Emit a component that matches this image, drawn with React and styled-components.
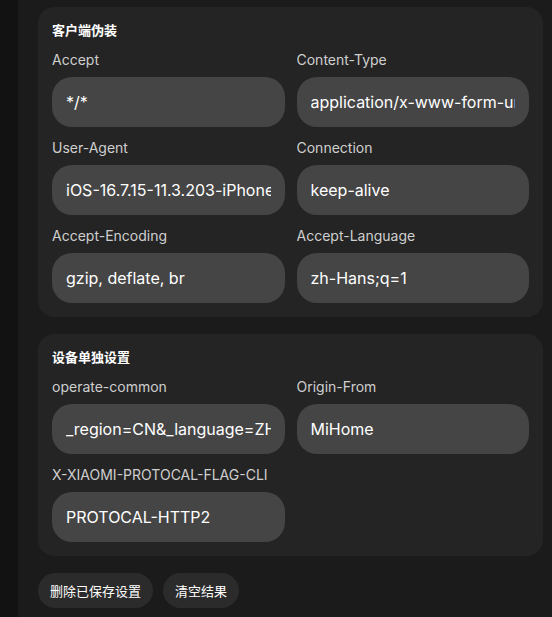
import styled, { createGlobalStyle } from "styled-components";

const GlobalStyle = createGlobalStyle`
  html, body, #root {
    height: 100%;
  }
  body {
    margin: 0;
    background: #1b1b1b;
    font-family: Inter, "Noto Sans CJK SC", sans-serif;
    color: #fff;
    overflow: hidden;
  }
  * {
    box-sizing: border-box;
  }
`;

const Layout = styled.div`
  display: flex;
  height: 100%;
`;

const SideStrip = styled.div`
  width: 18px;
  flex-shrink: 0;
  background: #121212;
`;

const Main = styled.div`
  flex: 1;
  padding: 7px 9px 0 20px;
  display: flex;
  flex-direction: column;
  gap: 17px;
`;

const Card = styled.section`
  background: #242424;
  border-radius: 16px;
  padding: 14px;
`;

const CardTitle = styled.h3`
  margin: 0 0 11px;
  font-family: "Noto Sans CJK SC", sans-serif;
  font-size: 13px;
  line-height: 18px;
  font-weight: 700;
  color: #fff;
`;

const FieldGrid = styled.div`
  display: grid;
  grid-template-columns: 1fr 1fr;
  column-gap: 12px;
  row-gap: 11px;
`;

const Field = styled.label`
  display: flex;
  flex-direction: column;
  gap: 7px;
  min-width: 0;
`;

const FieldName = styled.span`
  font-size: 14px;
  line-height: 20px;
  color: #cfcfcf;
  white-space: nowrap;
  overflow: hidden;
`;

const Input = styled.input`
  width: 100%;
  height: 50px;
  border: none;
  outline: none;
  border-radius: 20px;
  background: #454545;
  color: #fff;
  font-family: inherit;
  font-size: 16px;
  padding: 0 14px;
`;

const Actions = styled.div`
  display: flex;
  gap: 10px;
`;

const Button = styled.button`
  height: 35px;
  padding: 0 12px;
  border: none;
  border-radius: 18px;
  background: #2b2b2b;
  color: #fff;
  font-family: "Noto Sans CJK SC", sans-serif;
  font-size: 13px;
  cursor: pointer;
`;

const clientFields = [
  ["Accept", "*/*"],
  ["Content-Type", "application/x-www-form-urlencoded"],
  ["User-Agent", "iOS-16.7.15-11.3.203-iPhone14,2--D5A9C5B2-APP/xiaomi.smarthome"],
  ["Connection", "keep-alive"],
  ["Accept-Encoding", "gzip, deflate, br"],
  ["Accept-Language", "zh-Hans;q=1"],
];

const deviceFields = [
  ["operate-common", "_region=CN&_language=ZH_CN"],
  ["Origin-From", "MiHome"],
  ["X-XIAOMI-PROTOCAL-FLAG-CLI", "PROTOCAL-HTTP2"],
];

function FieldCard({ title, fields }) {
  return (
    <Card>
      <CardTitle>{title}</CardTitle>
      <FieldGrid>
        {fields.map(([name, value]) => (
          <Field key={name}>
            <FieldName>{name}</FieldName>
            <Input readOnly value={value} />
          </Field>
        ))}
      </FieldGrid>
    </Card>
  );
}

export default function App() {
  return (
    <>
      <GlobalStyle />
      <Layout>
        <SideStrip />
        <Main>
          <FieldCard title="客户端伪装" fields={clientFields} />
          <FieldCard title="设备单独设置" fields={deviceFields} />
          <Actions>
            <Button>删除已保存设置</Button>
            <Button>清空结果</Button>
          </Actions>
        </Main>
      </Layout>
    </>
  );
}
